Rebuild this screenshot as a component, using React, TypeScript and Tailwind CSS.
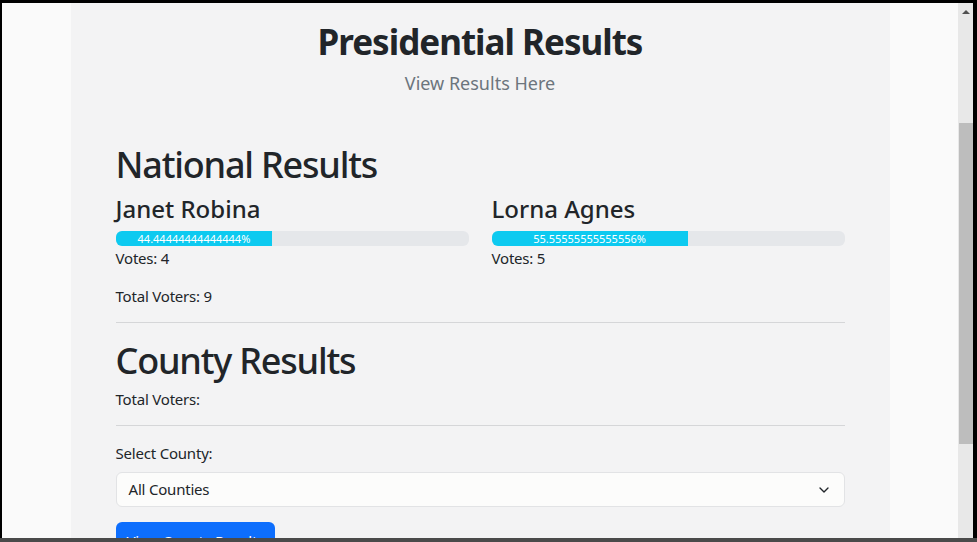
import { ChevronDown } from 'lucide-react';

const candidates = [
  { name: 'Janet Robina', percent: 44.44444444444444, votes: 4 },
  { name: 'Lorna Agnes', percent: 55.55555555555556, votes: 5 },
];

function Candidate({ name, percent, votes }: { name: string; percent: number; votes: number }) {
  return (
    <div className="flex-1">
      <h3 className="mt-[6px] text-[24px] leading-[30px] font-medium text-[#212529]">{name}</h3>
      <div className="mt-[7px] h-[15px] w-full rounded-[6px] bg-[#e5e7ea] overflow-hidden flex">
        <div
          className="h-full bg-[#0dcaf0] text-white text-[11px] leading-[15px] text-center"
          style={{ width: `${percent}%` }}
        >
          {percent}%
        </div>
      </div>
      <p className="text-[15px] leading-[24px] tracking-[-0.2px]">Votes: {votes}</p>
    </div>
  );
}

export default function App() {
  return (
    <div
      className="w-[977px] h-[542px] bg-black flex flex-col overflow-hidden"
      style={{ fontFamily: '"Noto Sans", "Open Sans", sans-serif' }}
    >
      <div className="h-[3px] shrink-0" />
      <div className="flex flex-1 min-h-0">
        <div className="w-[2px] shrink-0" />

        {/* page */}
        <div className="flex-1 bg-[#fafafa] overflow-hidden">
          <div className="mx-auto w-[819px] h-full bg-[#f3f3f4] px-[45px] pt-[15px] text-[#212529]">
            <h1 className="text-center text-[35px] leading-[48px] font-bold tracking-[-1px]">Presidential Results</h1>
            <p className="mt-[3px] text-center text-[18px] leading-[28px] text-[#6c757d]">View Results Here</p>

            <h2 className="mt-[45px] text-[36px] leading-[46px] font-medium tracking-[-1.2px]">National Results</h2>
            <div className="flex gap-[23px]">
              {candidates.map((c) => (
                <Candidate key={c.name} {...c} />
              ))}
            </div>
            <p className="mt-[14px] text-[15px] leading-[24px] tracking-[-0.2px]">Total Voters: 9</p>
            <hr className="mt-[14px] border-t border-[#d5d6d8]" />

            <h2 className="mt-[15px] text-[36px] leading-[46px] font-medium tracking-[-1.2px]">County Results</h2>
            <p className="mt-[3px] text-[15px] leading-[24px] tracking-[-0.2px]">Total Voters:</p>
            <hr className="mt-[14px] border-t border-[#d5d6d8]" />

            <p className="mt-[15px] text-[15px] leading-[24px] tracking-[-0.2px]">Select County:</p>
            <div className="mt-[7px] h-[35px] rounded-[6px] border border-[#e2e3e5] bg-[#fcfcfb] flex items-center justify-between pl-[12px] pr-[12px] text-[15px] tracking-[-0.2px]">
              <span>All Counties</span>
              <ChevronDown className="w-[16px] h-[16px]" strokeWidth={2} />
            </div>
            <button className="mt-[15px] h-[38px] px-[11px] rounded-[6px] bg-[#0d6efd] text-white text-[15px] tracking-[-0.2px]">
              View County Results
            </button>
          </div>
        </div>

        {/* scrollbar */}
        <div className="w-[15px] shrink-0 bg-[#e8e8e8] flex flex-col items-center">
          <div className="h-[18px] flex items-center justify-center">
            <div className="w-0 h-0 border-l-[4px] border-r-[4px] border-b-[4px] border-l-transparent border-r-transparent border-b-[#505050]" />
          </div>
          <div className="mt-[102px] w-[14px] h-[321px] bg-[#bdbdbd]" />
        </div>
        <div className="w-[4px] shrink-0" />
      </div>
      <div className="h-[4px] shrink-0 bg-[#4a4a4a]" />
    </div>
  );
}
